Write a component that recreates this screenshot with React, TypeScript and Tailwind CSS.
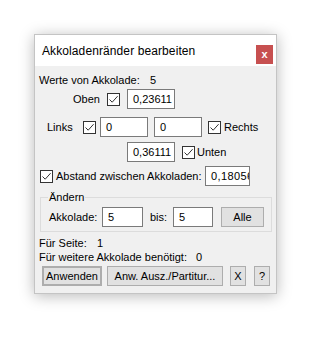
import React from "react";

const Check = () => (
  <span className="flex h-[13px] w-[13px] shrink-0 items-center justify-center border border-[#333333] bg-white">
    <svg width="11" height="11" viewBox="0 0 11 11">
      <path d="M1.5 5.5 L4.2 8.2 L9.6 2.2" fill="none" stroke="#333333" strokeWidth="1" />
    </svg>
  </span>
);

const Field = ({ value, className }: { value: string; className: string }) => (
  <div
    className={
      "flex h-[20px] shrink-0 items-center overflow-hidden whitespace-nowrap border border-[#7a7a7a] bg-white pl-[5px] " +
      className
    }
  >
    {value}
  </div>
);

const Btn = ({ label, className }: { label: string; className: string }) => (
  <div
    className={
      "flex h-[20px] shrink-0 items-center justify-center whitespace-nowrap border border-[#adadad] bg-[#e1e1e1] " +
      className
    }
  >
    {label}
  </div>
);

const App = () => {
  return (
    <main className="min-h-[340px] w-[317px] bg-white pl-[34px] pt-[34px] font-['Liberation_Sans',Arial,sans-serif] text-[11px] text-black">
      <div className="w-[243px] border border-[#c4c4c4] bg-[#f0f0f0] shadow-[0_2px_14px_rgba(0,0,0,0.28)]">
        {/* Title bar */}
        <div className="flex h-[31px] items-center justify-between bg-white pl-[7px] pr-[3px]">
          <span className="mt-[1px] text-[12px] tracking-[0.1px]">Akkoladenränder bearbeiten</span>
          <div className="mt-[8px] flex h-[19px] w-[17px] items-center justify-center bg-[#c75050] text-[11px] font-bold leading-none text-white">
            x
          </div>
        </div>

        {/* Body */}
        <div className="pb-[7px]">
          <div className="mt-[7px] flex h-[14px] items-center pl-[4px]">
            <span className="w-[111px]">Werte von Akkolade:</span>
            <span>5</span>
          </div>

          <div className="mt-[2px] flex h-[20px] items-center pl-[38px]">
            <span className="w-[34px]">Oben</span>
            <Check />
            <Field value="0,23611" className="ml-[7px] w-[48px]" />
          </div>

          <div className="mt-[8px] flex h-[20px] items-center pl-[12px]">
            <span className="w-[36px]">Links</span>
            <Check />
            <Field value="0" className="ml-[4px] w-[48px]" />
            <Field value="0" className="ml-[6px] w-[48px]" />
            <span className="ml-[6px]">
              <Check />
            </span>
            <span className="ml-[3px]">Rechts</span>
          </div>

          <div className="mt-[5px] flex h-[20px] items-center pl-[92px]">
            <Field value="0,36111" className="w-[48px]" />
            <span className="ml-[7px]">
              <Check />
            </span>
            <span className="ml-[2px]">Unten</span>
          </div>

          <div className="mt-[4px] flex h-[20px] items-center pl-[5px]">
            <Check />
            <span className="ml-[3px] w-[149px] whitespace-nowrap">Abstand zwischen Akkoladen:</span>
            <Field value="0,18056" className="h-[19px] w-[45px] tracking-[0.4px]" />
          </div>

          {/* Group box */}
          <div className="relative ml-[5px] mt-[11px] h-[35px] w-[232px] border border-[#dcdcdc]">
            <span className="absolute left-[7px] top-[-8px] bg-[#f0f0f0] px-[1px] leading-[14px]">Ändern</span>
            <div className="mt-[9px] flex h-[20px] items-center pl-[8px]">
              <span className="w-[53px]">Akkolade:</span>
              <Field value="5" className="w-[41px]" />
              <span className="ml-[7px] w-[23px]">bis:</span>
              <Field value="5" className="w-[40px]" />
              <Btn label="Alle" className="ml-[8px] h-[19px] w-[43px]" />
            </div>
          </div>

          <div className="mt-[4px] flex h-[14px] items-center pl-[4px]">
            <span className="w-[58px]">Für Seite:</span>
            <span>1</span>
          </div>
          <div className="flex h-[14px] items-center pl-[4px]">
            <span className="w-[157px]">Für weitere Akkolade benötigt:</span>
            <span>0</span>
          </div>

          <div className="mt-[2px] flex h-[20px] items-center pl-[7px]">
            <Btn label="Anwenden" className="w-[60px] border-2 border-[#0078d7]" />
            <Btn label="Anw. Ausz./Partitur..." className="ml-[5px] w-[116px]" />
            <Btn label="X" className="ml-[7px] w-[16px]" />
            <Btn label="?" className="ml-[8px] w-[16px]" />
          </div>
        </div>
      </div>
    </main>
  );
};

export default App;
